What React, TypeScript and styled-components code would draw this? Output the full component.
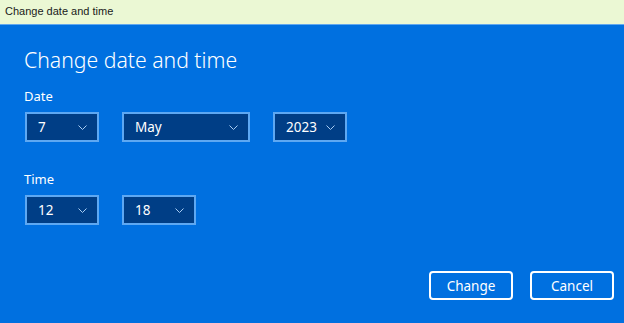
import React from "react";
import styled, { createGlobalStyle } from "styled-components";

const GlobalStyle = createGlobalStyle`
  html, body {
    margin: 0;
    padding: 0;
    background: #0070e0;
  }
  * {
    box-sizing: border-box;
  }
`;

const Window = styled.div({
    display: "flex",
    flexDirection: "column",
    width: "624px",
    height: "323px",
    fontFamily: "'Noto Sans', 'Open Sans', sans-serif",
    color: "#ffffff",
});

const TitleBar = styled.div({
    height: "25px",
    padding: "4px 5px 0",
    backgroundColor: "#ebf8d4",
    borderBottom: "1px solid #62a8ee",
    color: "#1a1a1a",
    fontFamily: "'Liberation Sans', Arial, sans-serif",
    fontSize: "11px",
    lineHeight: "15px",
});

const Panel = styled.div({
    flex: 1,
    display: "flex",
    flexDirection: "column",
    padding: "19px 10px 0 24px",
    backgroundColor: "#0070e0",
});

const Heading = styled.h1({
    margin: 0,
    fontSize: "21.2px",
    fontWeight: 300,
    lineHeight: "32px",
});

const Label = styled.div<{ top: number }>((props) => ({
    marginTop: `${props.top}px`,
    fontSize: "13px",
    lineHeight: "18px",
}));

const SelectRow = styled.div({
    display: "flex",
    gap: "23px",
    marginTop: "7px",
    paddingLeft: "1px",
});

const Select = styled.div<{ width: number }>((props) => ({
    display: "flex",
    alignItems: "center",
    justifyContent: "space-between",
    width: `${props.width}px`,
    height: "30px",
    padding: "0 10px 0 11px",
    backgroundColor: "#003e86",
    border: "2px solid #5ea8f2",
    fontSize: "13.5px",
}));

const Chevron = () => (
    <svg width="9" height="5" viewBox="0 0 9 5" fill="none">
        <path d="M0.5 0.5l4 4 4-4" stroke="#a8ccf2" strokeWidth="1" />
    </svg>
);

const Footer = styled.div({
    display: "flex",
    justifyContent: "flex-end",
    gap: "17px",
    marginTop: "auto",
    marginBottom: "23px",
});

const Button = styled.button({
    width: "84px",
    height: "29px",
    border: "2px solid #ffffff",
    borderRadius: "4px",
    backgroundColor: "transparent",
    color: "#ffffff",
    fontFamily: "inherit",
    fontSize: "13.5px",
    padding: 0,
});

export default function App() {
    return (
        <Window>
            <GlobalStyle />
            <TitleBar>Change date and time</TitleBar>
            <Panel>
                <Heading>Change date and time</Heading>
                <Label top={11}>Date</Label>
                <SelectRow>
                    <Select width={74}>
                        <span>7</span>
                        <Chevron />
                    </Select>
                    <Select width={128}>
                        <span>May</span>
                        <Chevron />
                    </Select>
                    <Select width={74}>
                        <span>2023</span>
                        <Chevron />
                    </Select>
                </SelectRow>
                <Label top={28}>Time</Label>
                <SelectRow>
                    <Select width={74}>
                        <span>12</span>
                        <Chevron />
                    </Select>
                    <Select width={74}>
                        <span>18</span>
                        <Chevron />
                    </Select>
                </SelectRow>
                <Footer>
                    <Button>Change</Button>
                    <Button>Cancel</Button>
                </Footer>
            </Panel>
        </Window>
    );
}
